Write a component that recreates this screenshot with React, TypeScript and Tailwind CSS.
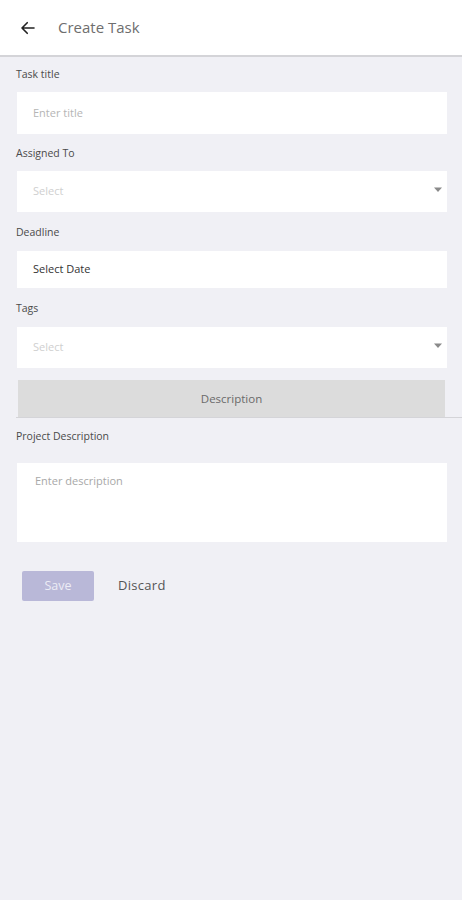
function Caret() {
  return (
    <svg width="10" height="6" viewBox="0 0 10 6" className="shrink-0">
      <path d="M1 0.5h8L5 5z" fill="#8a8a8a" />
    </svg>
  );
}

function Label({ children }: { children: string }) {
  return <p className="pl-4 text-[10.5px] leading-[14px] text-[#4a4a4a]">{children}</p>;
}

export default function App() {
  return (
    <div className="min-h-[900px] bg-[#f0f0f5] font-['Open_Sans',sans-serif]">
      <header className="flex h-[57px] items-center border-b-2 border-[#d4d4d8] bg-white">
        <svg width="18" height="18" viewBox="0 0 24 24" className="ml-[19px]" fill="none" stroke="#222" strokeWidth="2.2" strokeLinecap="round" strokeLinejoin="round">
          <path d="M20 12H4M11 5l-7 7 7 7" />
        </svg>
        <h1 className="ml-[21px] text-[15px] text-[#6e6e6e]">Create Task</h1>
      </header>

      <div className="pt-[10px]">
        <Label>Task title</Label>
        <div className="ml-[17px] mr-[15px] mt-[11px] flex h-[42px] items-center bg-white px-4 text-[11px] text-[#b5b5b5]">
          Enter title
        </div>

        <div className="mt-[12px]">
          <Label>Assigned To</Label>
        </div>
        <div className="ml-[17px] mr-[15px] mt-[11px] flex h-[41px] items-center justify-between bg-white pl-4 pr-[4px] text-[11px] text-[#cfcfcf]">
          <span>Select</span>
          <span className="-mt-1"><Caret /></span>
        </div>

        <div className="mt-[13px]">
          <Label>Deadline</Label>
        </div>
        <div className="ml-[17px] mr-[15px] mt-[12px] flex h-[37px] items-center bg-white px-4 text-[11px] text-[#333]">
          Select Date
        </div>

        <div className="mt-[13px]">
          <Label>Tags</Label>
        </div>
        <div className="ml-[17px] mr-[15px] mt-[12px] flex h-[41px] items-center justify-between bg-white pl-4 pr-[4px] text-[11px] text-[#cfcfcf]">
          <span>Select</span>
          <span className="-mt-1"><Caret /></span>
        </div>

        <div className="mt-[12px] ml-4 border-b border-[#d4d4d8]">
          <div className="ml-[2px] mr-[17px] flex h-[37px] items-center justify-center bg-[#dcdcdc] text-[11.5px] text-[#6a6a6a]">
            Description
          </div>
        </div>

        <div className="mt-[11px]">
          <Label>Project Description</Label>
        </div>
        <div className="ml-[17px] mr-[15px] mt-[20px] h-[79px] bg-white px-[18px] pt-[10px] text-[11px] text-[#a8a8a8]">
          Enter description
        </div>

        <div className="mt-[29px] flex items-center pl-[22px]">
          <button className="h-[30px] w-[72px] rounded-[2px] bg-[#b9b8d8] text-[12.5px] font-medium text-[#ececf5]">Save</button>
          <button className="ml-[24px] text-[13px] tracking-[0.3px] text-[#555]">Discard</button>
        </div>
      </div>
    </div>
  );
}
